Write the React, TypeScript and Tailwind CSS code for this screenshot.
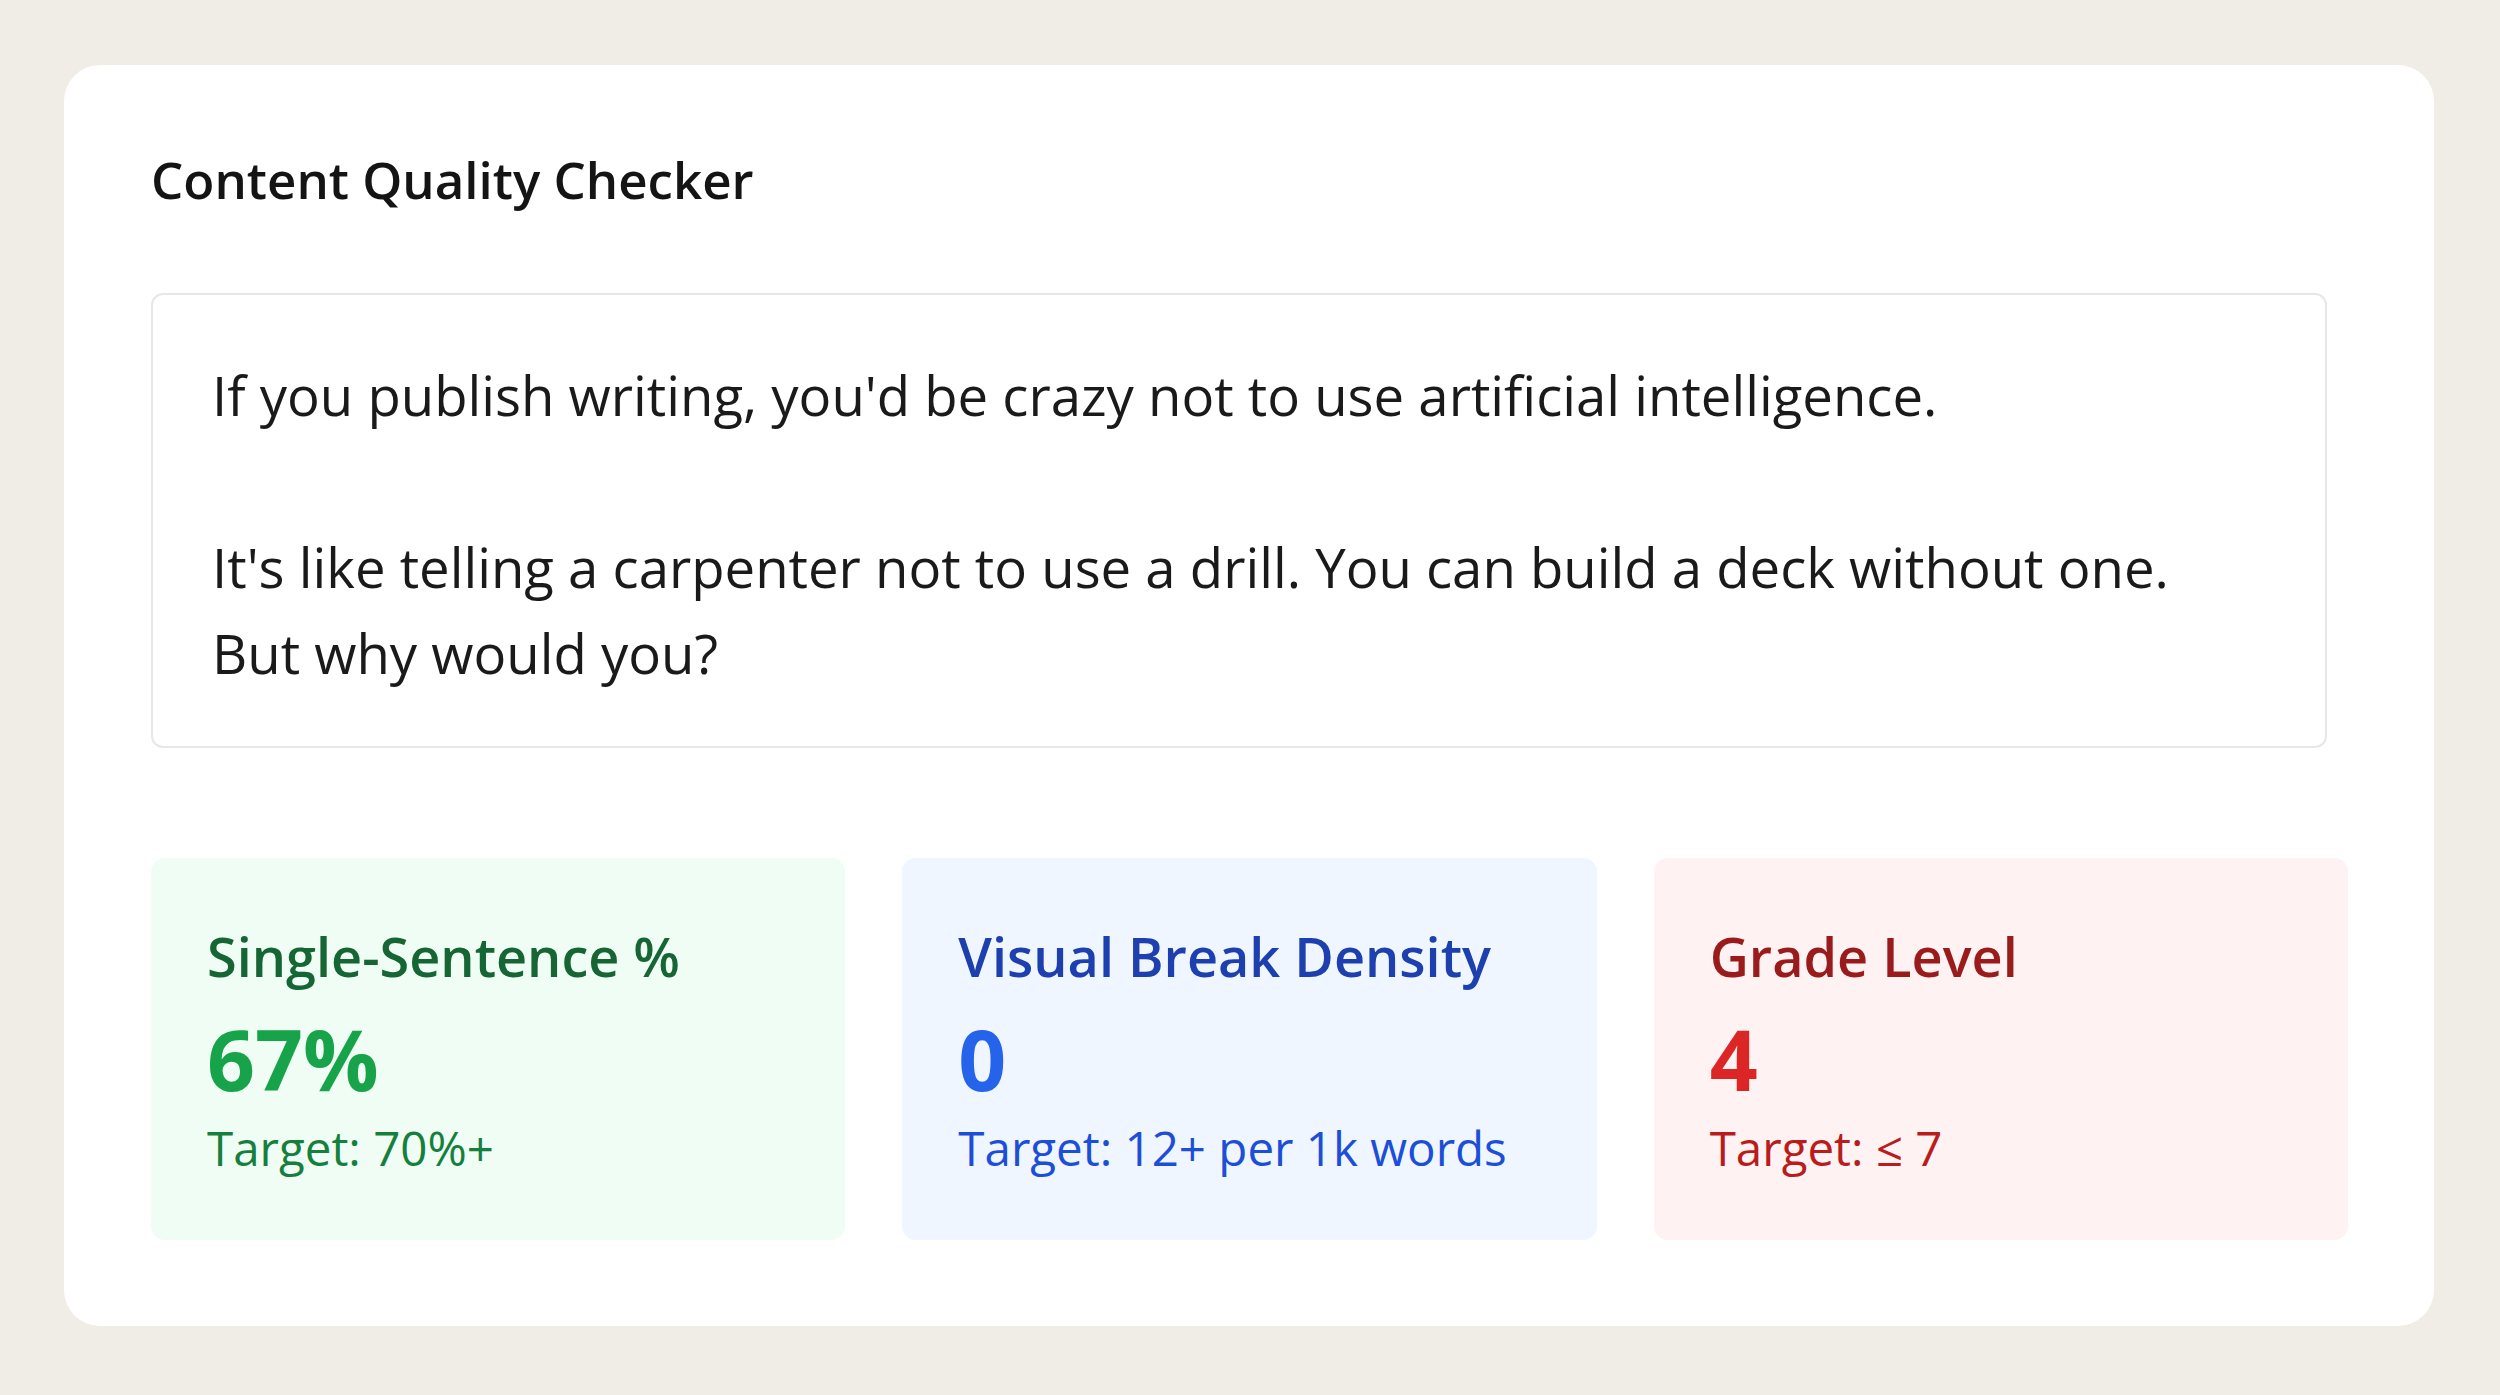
const font = { fontFamily: '"Open Sans", "Noto Sans", sans-serif' };

type Stat = {
  label: string;
  value: string;
  target: string;
  bg: string;
  labelColor: string;
  valueColor: string;
  targetColor: string;
};

function StatCard({ s }: { s: Stat }) {
  return (
    <div className={`h-[382px] rounded-[14px] pl-[56px] pt-[71px] ${s.bg}`}>
      <div className={`text-[54px] leading-[54px] font-semibold ${s.labelColor}`}>{s.label}</div>
      <div className={`mt-[34px] text-[84px] leading-[84px] font-bold ${s.valueColor}`}>{s.value}</div>
      <div className={`mt-[23px] text-[47.5px] leading-[47px] ${s.targetColor}`}>{s.target}</div>
    </div>
  );
}

export default function App() {
  return (
    <div className="min-h-[1395px] bg-[#f0ede7] pl-[64px] pt-[65px]" style={font}>
      <div className="w-[2370px] h-[1261px] rounded-[36px] bg-white p-[87px]">
        <h1 className="text-[51px] leading-[54px] font-semibold text-[#141414]">Content Quality Checker</h1>
        <div className="mt-[87px] w-[2176px] h-[455px] rounded-[12px] border-2 border-[#e5e7eb] pl-[59px] pt-[57px] text-[54.5px] leading-[86px] text-[#1a1a1a] whitespace-pre-wrap">
          {"If you publish writing, you'd be crazy not to use artificial intelligence.\n\nIt's like telling a carpenter not to use a drill. You can build a deck without one.\nBut why would you?"}
        </div>
        <div className="mt-[110px] w-[2197px] grid grid-cols-3 gap-[57px]">
          <StatCard
            s={{
              label: "Single-Sentence %",
              value: "67%",
              target: "Target: 70%+",
              bg: "bg-[#f0fdf4]",
              labelColor: "text-[#166534]",
              valueColor: "text-[#16a34a]",
              targetColor: "text-[#15803d]",
            }}
          />
          <StatCard
            s={{
              label: "Visual Break Density",
              value: "0",
              target: "Target: 12+ per 1k words",
              bg: "bg-[#eff6ff]",
              labelColor: "text-[#1e40af]",
              valueColor: "text-[#2563eb]",
              targetColor: "text-[#1d4ed8]",
            }}
          />
          <StatCard
            s={{
              label: "Grade Level",
              value: "4",
              target: "Target: ≤ 7",
              bg: "bg-[#fef2f2]",
              labelColor: "text-[#991b1b]",
              valueColor: "text-[#dc2626]",
              targetColor: "text-[#b91c1c]",
            }}
          />
        </div>
      </div>
    </div>
  );
}
